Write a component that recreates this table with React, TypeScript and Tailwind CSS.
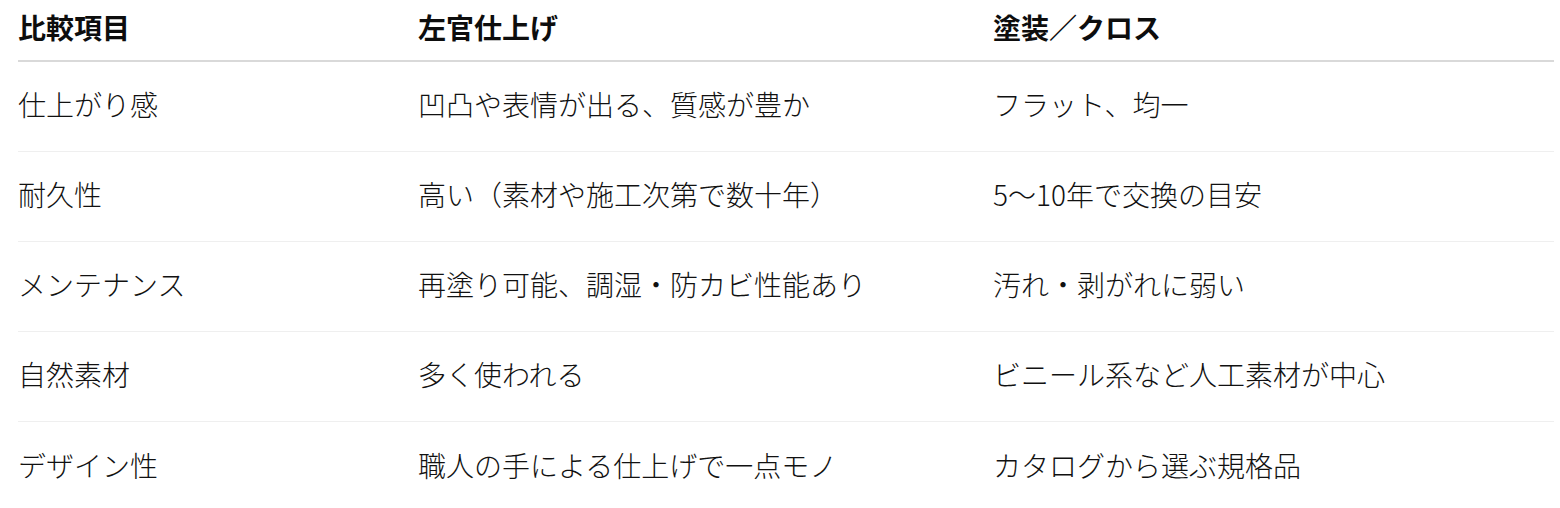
import React from "react";

const rows: [string, string, string][] = [
  ["仕上がり感", "凹凸や表情が出る、質感が豊か", "フラット、均一"],
  ["耐久性", "高い（素材や施工次第で数十年）", "5〜10年で交換の目安"],
  ["メンテナンス", "再塗り可能、調湿・防カビ性能あり", "汚れ・剥がれに弱い"],
  ["自然素材", "多く使われる", "ビニール系など人工素材が中心"],
  ["デザイン性", "職人の手による仕上げで一点モノ", "カタログから選ぶ規格品"],
];

export default function App() {
  return (
    <div
      className="w-[1560px] h-[508px] bg-white pl-[18px] pr-[6px]"
      style={{ fontFamily: '"Noto Sans CJK JP", "Noto Sans", sans-serif' }}
    >
      <div className="grid grid-cols-[400px_575px_1fr] h-[62px] items-center border-b-2 border-[#d9d9d9] text-[28px] font-bold text-[#0d0d0d] pb-[6px]">
        <div>比較項目</div>
        <div>左官仕上げ</div>
        <div>塗装／クロス</div>
      </div>
      {rows.map((r, i) => (
        <div
          key={i}
          className={
            "grid grid-cols-[400px_575px_1fr] h-[90px] items-center text-[28px] font-light text-[#111111] pb-[5px] " +
            (i < rows.length - 1 ? "border-b border-[#efefef]" : "")
          }
        >
          <div>{r[0]}</div>
          <div>{r[1]}</div>
          <div>{r[2]}</div>
        </div>
      ))}
    </div>
  );
}
